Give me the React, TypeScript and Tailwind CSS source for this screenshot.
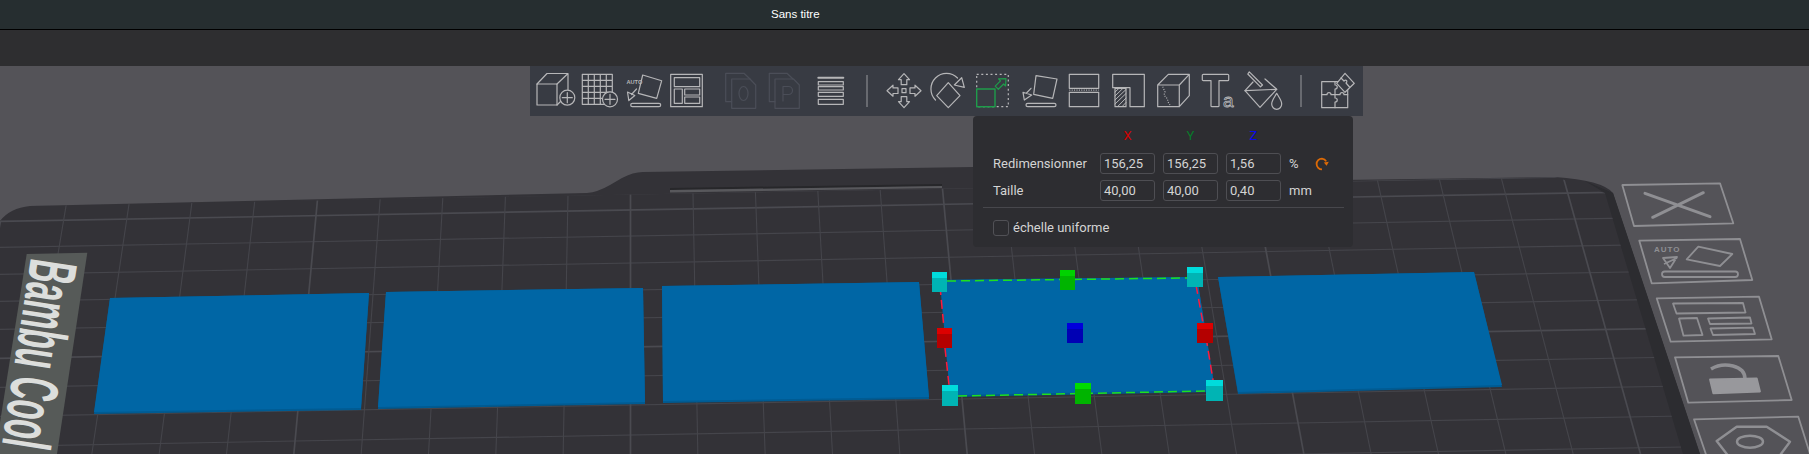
import type { ReactNode } from 'react'

const ICON_STROKE = '#b6b6b8'
const DIM_STROKE = '#4b4e58'
const TOOLBAR_BG = '#383b43'

function Icon({ children, color = ICON_STROKE }: { children: ReactNode; color?: string }) {
  return (
    <svg
      viewBox="0 0 40 40"
      className="h-10 w-10 shrink-0 overflow-visible"
      fill="none"
      stroke={color}
      strokeWidth={1.2}
      strokeLinejoin="round"
      strokeLinecap="round"
    >
      {children}
    </svg>
  )
}

function PlusCircle({ cx, cy }: { cx: number; cy: number }) {
  return (
    <>
      <circle cx={cx} cy={cy} r={7.5} fill={TOOLBAR_BG} />
      <path d={`M${cx - 5} ${cy}H${cx + 5}M${cx} ${cy - 5}V${cy + 5}`} />
    </>
  )
}

function Separator() {
  return <div className="h-8 w-[1.5px] shrink-0 bg-[#686a70]" />
}

function Toolbar() {
  const arrow = 'M18 1L12.5 7H15.2V12H20.8V7H23.5Z'
  return (
    <div className="absolute left-[530px] top-0 flex h-[50px] w-[833px] items-center bg-[#383b43] pl-[5px]">
      <div className="flex gap-[4.8px]">
        <Icon>
          <rect x="2" y="13" width="20" height="21" />
          <path d="M2 13L12 2.5H33L22 13M33 2.5V19M22 34L26 30" />
          <PlusCircle cx={32.3} cy={26.7} />
        </Icon>
        <Icon>
          <path d="M2.3 3.3H32.3V33.3H2.3ZM8.3 3.3V33.3M14.3 3.3V33.3M20.3 3.3V33.3M26.3 3.3V33.3M2.3 9.3H32.3M2.3 15.3H32.3M2.3 21.3H32.3M2.3 27.3H32.3" />
          <PlusCircle cx={30} cy={28.3} />
        </Icon>
        <Icon>
          <text x="1.5" y="13" fontFamily="Liberation Sans" fontSize="5.6" fontWeight="700" fill={ICON_STROKE} stroke="none">
            AUTO
          </text>
          <path d="M17.7 4L36.7 9.7L31.7 27.3L13.3 22.3Z" />
          <path d="M11.5 18L6.5 23.5M2.5 21L9.8 24.5L3.8 29.5Z" />
          <rect x="5.7" y="32.3" width="30" height="3.4" rx="1.7" />
        </Icon>
        <Icon>
          <rect x="1.7" y="3.3" width="31.6" height="32.4" />
          <rect x="5.3" y="6.7" width="25.4" height="9" />
          <rect x="5.3" y="18" width="8" height="14.3" />
          <rect x="15.7" y="18" width="15" height="6" />
          <rect x="15.7" y="26" width="15" height="6.3" />
        </Icon>
      </div>
      <div className="ml-[15.6px] flex gap-[5px]">
        <Icon color={DIM_STROKE}>
          <path d="M6.7 30.7H0.7V2.3H19L25 8" />
          <path d="M6.7 8H25L30.7 14V37.3H6.7Z" />
          <ellipse cx="18.5" cy="22.5" rx="4.5" ry="7" />
        </Icon>
        <Icon color={DIM_STROKE}>
          <path d="M5 30.7H-0.7V2.3H17L23 8" />
          <path d="M5 8H23.5L29.3 14V37.3H5Z" />
          <path d="M13 30V15.5H18.5A4 4 0 0 1 18.5 23.5H13" />
        </Icon>
        <Icon>
          <path d="M3.3 6.7H28.3" strokeWidth={2} />
          <rect x="3.3" y="10.7" width="25" height="3.3" />
          <rect x="3.3" y="15.7" width="25" height="3.3" />
          <rect x="3.3" y="21.3" width="25" height="4" />
          <rect x="3.3" y="28.3" width="25" height="5" />
        </Icon>
      </div>
      <div className="ml-[11.4px]">
        <Separator />
      </div>
      <div className="ml-[18.5px] flex gap-[4.8px]">
        <Icon>
          <g transform="translate(0 1.7)">
            <path d={arrow} />
            <path d={arrow} transform="rotate(90 18 18)" />
            <path d={arrow} transform="rotate(180 18 18)" />
            <path d={arrow} transform="rotate(270 18 18)" />
            <rect x="16" y="16" width="4" height="4" />
          </g>
        </Icon>
        <Icon>
          <path d="M4.5 29A15.5 15.5 0 0 1 26.5 7" />
          <path d="M30.7 6.7L33.3 16.3L23.3 14Z" />
          <path d="M17.3 11.7L29 24.7L17.3 36.7L5.7 24.7Z" />
        </Icon>
        <Icon>
          <rect x="0.7" y="3.3" width="31.6" height="32.4" strokeDasharray="2 2.6" strokeLinecap="butt" />
          <rect x="0.7" y="18" width="18.3" height="17.7" stroke="#1f9c4b" strokeWidth={1.4} fill={TOOLBAR_BG} />
          <path d="M0 -7L-5 -1.5H-2.2V6H2.2V-1.5H5Z" stroke="#1f9c4b" fill={TOOLBAR_BG} transform="translate(25 12.5) rotate(45)" />
        </Icon>
        <Icon>
          <path d="M15 4.7L36 8L31.7 27.3L12.7 23.3Z" />
          <path d="M10 17.3L5.5 22M2 21.3L10.7 24L3.3 29Z" />
          <rect x="5" y="32.3" width="30" height="3.4" rx="1.7" />
        </Icon>
        <Icon>
          <rect x="3.3" y="3.3" width="29.4" height="14" />
          <path d="M3.3 19.2H32.7" strokeDasharray="1 1.4" strokeLinecap="butt" />
          <rect x="3.3" y="21.3" width="29.4" height="14.4" />
        </Icon>
        <Icon>
          <path d="M2.7 3.3H34.3V35.7H20V16.7H2.7Z" />
          <rect x="5" y="17.3" width="11" height="18.4" />
          <path d="M5 21L9 17.3M5 25L13 17.3M5 29L16 18.5M5 33L16 22.5M7.5 35.7L16 27M12 35.7L16 31.5" strokeWidth={1} />
        </Icon>
        <Icon>
          <path d="M2.7 14H24.3V35.7H2.7ZM2.7 14L13.3 3.3H34.3L24.3 14M34.3 3.3V24.7L24.3 35.7" />
          <path d="M7.7 15.7L10 21L9 24L12.5 28L13 31L15 34" strokeDasharray="1 1.5" strokeLinecap="butt" />
        </Icon>
        <Icon>
          <path d="M3.3 3.3H27.7A1 1 0 0 1 28.7 4.3V8.7A1 1 0 0 1 27.7 9.7H19V35A1 1 0 0 1 18 35.7H12A1 1 0 0 1 11 35V9.7H3.3A1 1 0 0 1 2.3 8.7V4.3A1 1 0 0 1 3.3 3.3Z" />
          <text x="23" y="36" fontFamily="Liberation Sans" fontSize="19" fill="none" stroke={ICON_STROKE} strokeWidth={0.8}>
            a
          </text>
        </Icon>
        <Icon>
          <path d="M20 8L31.7 18.3L15 36.3L0 19.7L8 11" />
          <path d="M0 19.7L31.7 18.3" />
          <path d="M4.3 0.8L2.8 3L15.5 15.8L17.5 14Z" />
          <path d="M31.7 22.3C29 27 26.7 29.5 26.7 33A5 5.3 0 0 0 36.7 33C36.7 29.5 34.3 27 31.7 22.3Z" />
        </Icon>
      </div>
      <div className="ml-[15.6px]">
        <Separator />
      </div>
      <div className="ml-[18.5px]">
        <Icon>
          <rect x="1.7" y="10.7" width="26" height="26" />
          <path d="M1.7 23.7H7C7 21 11 21 11 23.7H15V18C18 18 18 14 15 14V10.7M15 23.7V27C18 27 18 31 15 31V36.7M15 23.7H20C20 21 24 21 24 23.7H27.7" />
          <path d="M25 2.3L34.3 12.3L25 21.3L16.7 12.3Z" fill={TOOLBAR_BG} />
          <path d="M21 7L24 10C26 8 28 10 26 12L29.5 16" />
        </Icon>
      </div>
    </div>
  )
}

function ValueBox({ value }: { value: string }) {
  return (
    <div className="mr-[8px] flex h-[21px] w-[55px] items-center rounded-[3px] border border-[#4e4e53] pl-[3px] text-[13px] text-[#d4d4d4]">
      {value}
    </div>
  )
}

function ScaleRow({ label, values, unit, action }: { label: string; values: string[]; unit: string; action?: ReactNode }) {
  return (
    <div className="flex h-[21px] items-center">
      <span className="w-[107px] text-[13px] text-[#d4d4d4]">{label}</span>
      {values.map((value, i) => (
        <ValueBox key={i} value={value} />
      ))}
      <span className="w-[26px] text-[13px] text-[#d4d4d4]">{unit}</span>
      {action}
    </div>
  )
}

function ScalePanel() {
  return (
    <div className="absolute left-[973px] top-[50px] h-[131px] w-[380px] rounded-[4px] bg-[#2d2d31] pl-[20px] pr-[9px] pt-[12px] font-['Roboto',sans-serif]">
      <div className="ml-[107px] flex h-[16px] items-center text-[13px]">
        <span className="mr-[8px] w-[55px] text-center text-[#d40000]">X</span>
        <span className="mr-[8px] w-[55px] text-center text-[#087a2a]">Y</span>
        <span className="w-[55px] text-center text-[#0a0ae6]">Z</span>
      </div>
      <div className="mt-[9px] flex flex-col gap-[6px]">
        <ScaleRow
          label="Redimensionner"
          values={['156,25', '156,25', '1,56']}
          unit="%"
          action={
            <svg viewBox="0 0 14 14" className="h-[14px] w-[14px]" fill="none" stroke="#dd6a06" strokeWidth={1.8}>
              <path d="M7 12.4A5.4 5.4 0 0 1 7 1.6A5.2 5.2 0 0 1 11.2 4.4" />
              <path d="M13.8 4.8L8.8 5.4L11.6 8.8Z" fill="#dd6a06" stroke="none" />
            </svg>
          }
        />
        <ScaleRow label="Taille" values={['40,00', '40,00', '0,40']} unit="mm" />
      </div>
      <div className="-ml-[10px] mt-[6px] h-px bg-[#47474c]" />
      <div className="mt-[11px] flex items-center gap-[4px]">
        <div className="h-[16px] w-[16px] rounded-[3px] border border-[#515156]" />
        <span className="-mt-[1px] text-[13px] text-[#d4d4d4]">échelle uniforme</span>
      </div>
    </div>
  )
}

type Pt = [number, number]

const pts = (list: Pt[]) => list.map((p) => p.join(',')).join(' ')

const plates: Pt[][] = [
  [[110, 298], [369, 293], [361, 408], [94, 412]],
  [[386, 292], [643, 288], [645, 402], [378, 407]],
  [[662, 286], [919, 282], [929, 397], [663, 401]],
  [[940, 280], [1197, 277], [1215, 390], [950, 395]],
  [[1218, 277], [1474, 272], [1502, 385], [1238, 392]],
]

const handles: { x: number; y: number; w: number; h: number; top: string; front: string }[] = [
  { x: 932, y: 272, w: 15, h: 20, top: '#00dcdc', front: '#00b4b4' },
  { x: 1187, y: 267, w: 16, h: 20, top: '#00dcdc', front: '#00b4b4' },
  { x: 942, y: 385, w: 16, h: 21, top: '#00dcdc', front: '#00b4b4' },
  { x: 1206, y: 380, w: 17, h: 21, top: '#00dcdc', front: '#00b4b4' },
  { x: 1060, y: 270, w: 15, h: 20, top: '#00d200', front: '#00b400' },
  { x: 1075, y: 383, w: 16, h: 21, top: '#00dc00', front: '#00b400' },
  { x: 937, y: 328, w: 15, h: 20, top: '#dc0000', front: '#b40000' },
  { x: 1197, y: 323, w: 16, h: 20, top: '#dc0000', front: '#b40000' },
  { x: 1067, y: 323, w: 16, h: 20, top: '#0000dc', front: '#0000b4' },
]

const spacing = (y: number) => 62.2 + (y - 178) * 0.0186
const gridX = (k: number, y: number) => 630.5 + k * spacing(y)
const SLOPE = -0.018

const verticals = Array.from({ length: 26 }, (_, i) => i - 10)
const horizontals = [194, 210, 236, 263, 290, 318, 347, 376, 405, 435, 466]

const BED_PATH =
  'M0 221Q10 208 30 206L587 193Q598 192 610 185L622 178Q633 172 643 172L973 167L1340 180L1555 177Q1602 180 1613 193L1700 454H0Z'

function Scene() {
  return (
    <svg viewBox="0 66 1809 388" className="absolute inset-0 h-full w-full">
      <defs>
        <clipPath id="grid-clip">
          <polygon points="0,454 0,221 30,206 1555,177 1605,193 1683,454" />
        </clipPath>
      </defs>
      <path d={BED_PATH} fill="#333237" />
      <polygon points="1613,193 1700,454 1683,454 1605,193 1585,181" fill="#2c2c30" />
      <g clipPath="url(#grid-clip)">
        {horizontals.map((y) => (
          <line
            key={y}
            x1={0}
            y1={y - SLOPE * 630}
            x2={1809}
            y2={y + SLOPE * (1809 - 630)}
            stroke={y === 210 || y === 347 ? '#4a4a50' : '#45454b'}
            strokeWidth={y === 210 || y === 347 ? 1.7 : 1.1}
          />
        ))}
        {verticals.map((k) => {
          const top = 175
          return (
            <line
              key={k}
              x1={gridX(k, top)}
              y1={top}
              x2={gridX(k, 454)}
              y2={454}
              stroke={k % 5 === 0 ? '#4a4a50' : '#45454b'}
              strokeWidth={k % 5 === 0 ? 1.7 : 1.1}
            />
          )
        })}
      </g>
      <polygon points="670,188 942,184 942,186 670,190" fill="#27272a" />
      <polygon points="670,190 942,186 942,188 670,192.5" fill="#58585c" />

      <polygon points="26.7,254 87.3,252.7 57,454 -5,454" fill="#565a58" />
      <text
        transform="translate(31 257) rotate(98.8)"
        fontFamily="Liberation Sans"
        fontWeight={700}
        fontSize={68}
        fill="#dcdedc"
        textLength={190}
        lengthAdjust="spacingAndGlyphs"
      >
        Bambu Cool
      </text>

      {plates.map((p, i) => (
        <g key={i}>
          <polygon points={pts(p.map(([x, y]) => [x, y + (y > 350 ? 2 : 0)] as Pt))} fill="#005b92" />
          <polygon points={pts(p)} fill="#0066a5" />
        </g>
      ))}

      <g strokeWidth={1.5} strokeDasharray="9 5" fill="none">
        <line x1={947} y1={281} x2={1187} y2={278} stroke="#1fe01f" />
        <line x1={958} y1={396} x2={1206} y2={391} stroke="#1fe01f" />
        <line x1={940} y1={286} x2={944} y2={328} stroke="#ff1a3c" />
        <line x1={945} y1={348} x2={949} y2={385} stroke="#ff1a3c" />
        <line x1={1196} y1={285} x2={1203} y2={323} stroke="#ff1a3c" />
        <line x1={1206} y1={337} x2={1213} y2={380} stroke="#ff1a3c" />
      </g>
      {handles.map((h, i) => (
        <g key={i}>
          <rect x={h.x} y={h.y} width={h.w} height={h.h} fill={h.front} />
          <rect x={h.x} y={h.y} width={h.w} height={6} fill={h.top} />
        </g>
      ))}

      <g fill="none" stroke="#8f8f93" strokeWidth={1.8} strokeLinejoin="round">
        <polygon points="1622.3,185 1720,183.3 1733.3,223.3 1634,226" />
        <path d="M1645 193.3L1710 216.7M1703.3 192.7L1652.7 217.3" strokeWidth={3} strokeLinecap="round" />

        <polygon points="1639.3,240.7 1740,239 1752.3,280 1651.7,283.3" />
        <text x="1654" y="252" fontFamily="Liberation Sans" fontWeight={700} fontSize={8} letterSpacing={1} fill="#8f8f93" stroke="none">
          AUTO
        </text>
        <polygon points="1698.3,246.7 1732.3,254 1720,266 1686.7,259.3" />
        <path d="M1663 258L1677 257L1670 268Z M1677 258L1664 264" />
        <rect x="1662" y="271.5" width="76" height="5.5" rx="2.7" />

        <polygon points="1656.7,298.3 1759,296.7 1771.7,339.3 1670.7,341.7" />
        <polygon points="1673,303.5 1743,303 1745.5,312.5 1676.5,313.5" />
        <polygon points="1679,318.5 1697,318 1702.5,335 1683.5,335.7" />
        <polygon points="1708,318.5 1750,317.5 1751.5,323.5 1710,324" />
        <polygon points="1710.5,328.5 1753,327.7 1755,334 1713,335" />

        <polygon points="1675,357.3 1778.3,356 1791.7,400 1688.3,402.7" />
        <path d="M1711 369Q1721 363 1733 366Q1745 369 1745 379" strokeWidth={3.5} />
        <polygon points="1710,379.5 1756.7,378.3 1760,391.5 1713.3,393.3" fill="#98989c" stroke="#98989c" />

        <polygon points="1694,419.3 1798.3,416.7 1815,470 1712,472" />
        <polygon points="1716.7,441 1736.7,426.7 1766.7,426.7 1790,441.7 1775,462 1733,462" strokeWidth={2.4} />
        <ellipse cx="1750" cy="441.7" rx="13" ry="6" strokeWidth={2.4} />
      </g>
    </svg>
  )
}

export default function App() {
  return (
    <div className="flex h-[454px] w-[1809px] flex-col overflow-hidden bg-[#545358]">
      <div className="flex h-[29px] items-center bg-[#262e30] pl-[771px] font-['Liberation_Sans',sans-serif] text-[11.5px] text-white">
        Sans titre
      </div>
      <div className="h-px bg-black" />
      <div className="h-[36px] bg-[#2e2e30]" />
      <div className="relative flex-1">
        <Scene />
        <Toolbar />
        <ScalePanel />
      </div>
    </div>
  )
}
